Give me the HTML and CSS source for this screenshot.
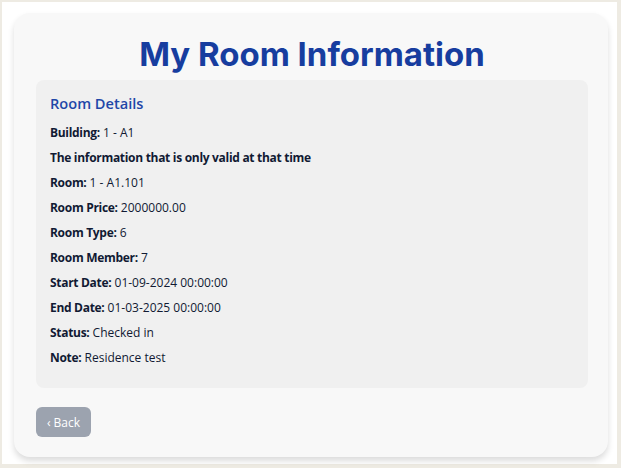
FILE: index.html
```html
<!DOCTYPE html>
<html lang="en">
<head>
<meta charset="utf-8">
<title>My Room Information</title>
<link rel="stylesheet" href="styles.css">
</head>
<body>
<div class="page">
  <div class="card">
    <h1 class="title">My Room Information</h1>
    <div class="details">
      <h3 class="details-title">Room Details</h3>
      <p class="row"><strong>Building:</strong> 1 - A1</p>
      <p class="row"><strong>The information that is only valid at that time</strong></p>
      <p class="row"><strong>Room:</strong> 1 - A1.101</p>
      <p class="row"><strong>Room Price:</strong> 2000000.00</p>
      <p class="row"><strong>Room Type:</strong> 6</p>
      <p class="row"><strong>Room Member:</strong> 7</p>
      <p class="row"><strong>Start Date:</strong> 01-09-2024 00:00:00</p>
      <p class="row"><strong>End Date:</strong> 01-03-2025 00:00:00</p>
      <p class="row"><strong>Status:</strong> Checked in</p>
      <p class="row"><strong>Note:</strong> Residence test</p>
    </div>
    <button class="back" type="button">&lsaquo; Back</button>
  </div>
</div>
</body>
</html>
```

FILE: styles.css
```css
html, body {
  margin: 0;
  padding: 0;
}
body {
  background: #eeebe3;
  font-family: "Open Sans", "Liberation Sans", sans-serif;
  width: 621px;
  height: 468px;
  overflow: hidden;
}
.page {
  background: #ffffff;
  margin: 2px 4px 0 2px;
  height: 462px;
  box-sizing: border-box;
  padding: 11px 9px 0 12px;
}
.card {
  background: #f8f8f8;
  border-radius: 16px;
  box-shadow: 0 4px 6px rgba(0, 0, 0, 0.14);
  padding: 22px 20px 20px 22px;
  height: 444px;
  box-sizing: border-box;
  display: flex;
  flex-direction: column;
  align-items: flex-start;
}
.title {
  font-family: Inter, "Liberation Sans", sans-serif;
  font-weight: 700;
  font-size: 33px;
  line-height: 38px;
  color: #173d9f;
  margin: 0 0 7px 0;
  align-self: stretch;
  text-align: center;
}
.details {
  align-self: stretch;
  background: #f0f0f0;
  border-radius: 8px;
  padding: 12px 14px 21px 14px;
  display: flex;
  flex-direction: column;
  gap: 7px;
}
.details-title {
  font-size: 14.6px;
  line-height: 22px;
  font-weight: 600;
  color: #1f47a8;
  margin: 0 0 3px 0;
}
.row {
  margin: 0;
  font-size: 12px;
  line-height: 18px;
  color: #111a33;
}
.row strong {
  font-weight: 700;
  letter-spacing: -0.3px;
}
.back {
  margin-top: 19px;
  background: #9ca3af;
  color: #ffffff;
  border: none;
  border-radius: 6px;
  height: 30px;
  width: 55px;
  padding: 0;
  font-family: "Open Sans", "Liberation Sans", sans-serif;
  font-size: 12px;
}
```
